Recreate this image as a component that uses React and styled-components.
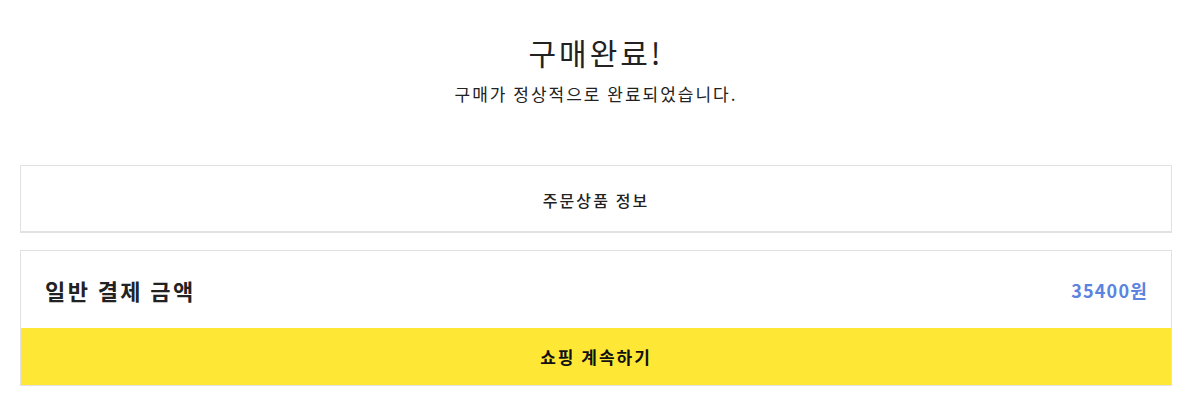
import React from 'react';
import styled, { createGlobalStyle } from 'styled-components';

const GlobalStyle = createGlobalStyle`
  body {
    margin: 0;
    background: #fff;
    font-family: 'Noto Sans CJK KR', 'Noto Sans', sans-serif;
    color: #222;
  }
`;

const Page = styled.div`
  padding: 30px 18px 0 20px;
`;

const Header = styled.div`
  text-align: center;
  margin-bottom: 59px;
`;

const Title = styled.h1`
  margin: 0;
  font-size: 30px;
  font-weight: 400;
  line-height: 44px;
  letter-spacing: 3px;
`;

const Subtitle = styled.p`
  margin: 8px 0 0;
  font-size: 17px;
  line-height: 24px;
  letter-spacing: 2px;
`;

const Card = styled.div`
  border: 1px solid #e2e2e2;
  border-bottom-width: ${(p) => (p.$thick ? '2px' : '1px')};
  margin-bottom: ${(p) => p.$gap || 0}px;
  background: #fff;
`;

const CardHeading = styled.div`
  height: 65px;
  padding-top: 3px;
  box-sizing: border-box;
  display: flex;
  align-items: center;
  justify-content: center;
  font-size: 16px;
  font-weight: 500;
  letter-spacing: 2.1px;
`;

const PriceRow = styled.div`
  height: 77px;
  display: flex;
  align-items: center;
  justify-content: space-between;
  padding: 0 24px;
`;

const PriceLabel = styled.span`
  font-size: 22px;
  font-weight: 700;
  letter-spacing: 2.4px;
`;

const Price = styled.span`
  font-size: 18px;
  font-weight: 700;
  color: #5b84e0;
  letter-spacing: 1.2px;
  margin-right: -1px;
`;

const ContinueButton = styled.button`
  display: flex;
  width: 100%;
  height: 57px;
  align-items: center;
  justify-content: center;
  border: none;
  background: #ffe835;
  font-family: inherit;
  font-size: 17px;
  font-weight: 700;
  letter-spacing: 2px;
  color: #111;
  cursor: pointer;
`;

export default function App() {
  return (
    <>
      <GlobalStyle />
      <Page>
        <Header>
          <Title>구매완료!</Title>
          <Subtitle>구매가 정상적으로 완료되었습니다.</Subtitle>
        </Header>
        <Card $thick $gap={17}>
          <CardHeading>주문상품 정보</CardHeading>
        </Card>
        <Card>
          <PriceRow>
            <PriceLabel>일반 결제 금액</PriceLabel>
            <Price>35400원</Price>
          </PriceRow>
          <ContinueButton>쇼핑 계속하기</ContinueButton>
        </Card>
      </Page>
    </>
  );
}
